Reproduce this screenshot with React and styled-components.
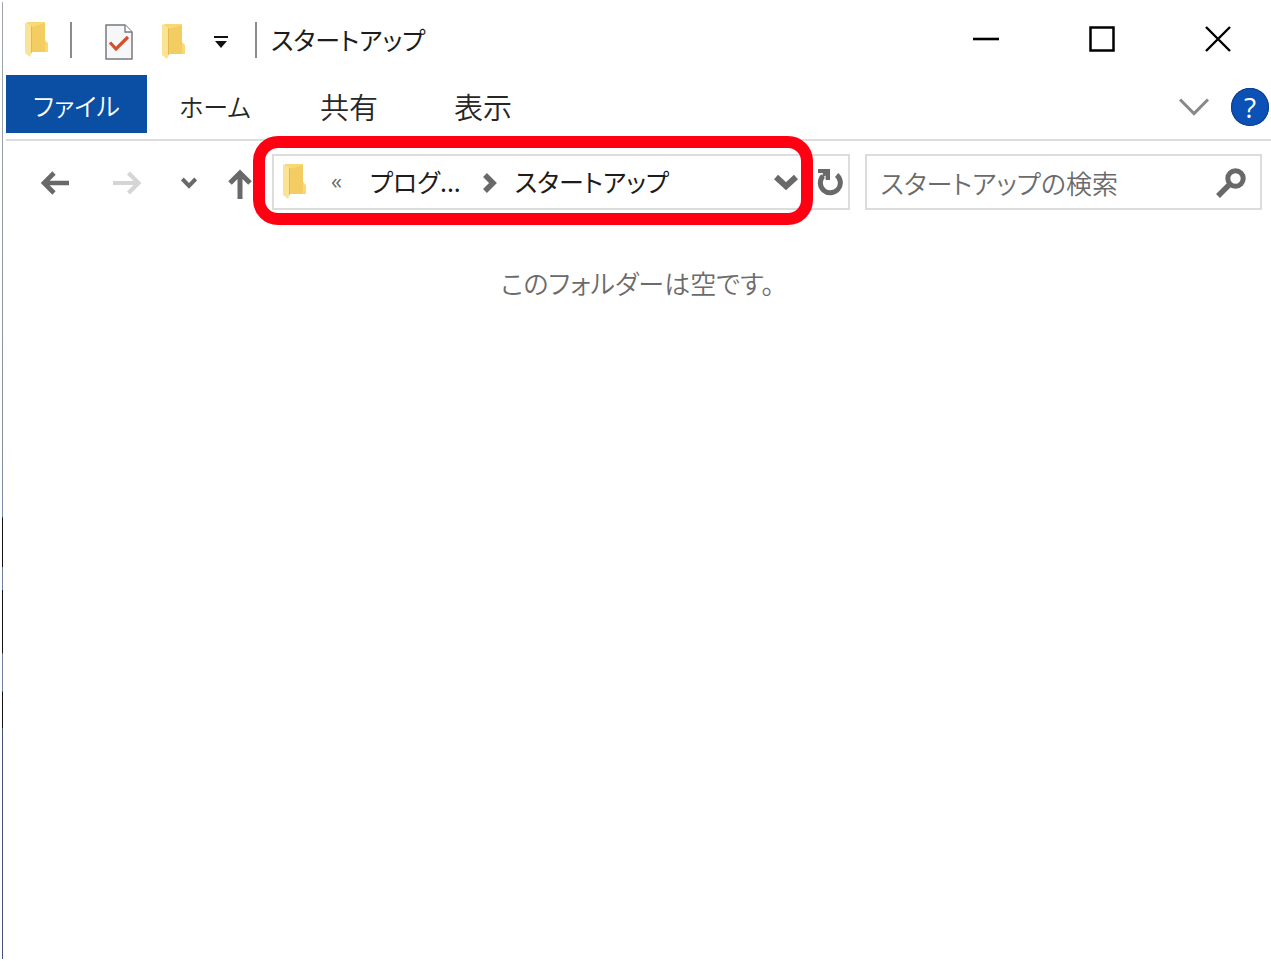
import React, { useState } from 'react';
import styled, { createGlobalStyle } from 'styled-components';

const colors = {
  blue: '#0a4fa3',
  line: '#dcdcdc',
  icon: '#696969',
  text: '#1c1c1c',
  subtext: '#6b6b6b',
  mark: '#ff0013',
};

const GlobalStyle = createGlobalStyle`
  * {
    box-sizing: border-box;
  }

  body {
    margin: 0;
    background: #ffffff;
    font-family: 'Noto Sans CJK JP', sans-serif;
    font-feature-settings: 'palt';
  }

  button,
  input {
    font: inherit;
    font-feature-settings: inherit;
    color: inherit;
    border: none;
    background: none;
    padding: 0;
    margin: 0;
  }

  svg {
    display: block;
    flex: none;
  }
`;

const Window = styled.main`
  display: flex;
  flex-direction: column;
  min-height: calc(100vh - 4px);
  margin: 2px 0 2px 2px;
  padding-left: 2px;
  background: linear-gradient(
      #a2a5ab 0%,
      #7d8ca5 53.8%,
      #111111 53.9% 59%,
      #6f819e 59.1% 61.4%,
      #111111 61.5% 68%,
      #6f819e 68.1% 72%,
      #111111 72.1% 75.8%,
      #44537a 75.9%
    )
    left top / 1px 100% no-repeat;
`;

const TitleBar = styled.header`
  display: flex;
  align-items: center;
  height: 73px;
  padding: 0 40px 0 20px;
`;

const TitleTools = styled.div`
  display: flex;
  align-items: center;
  gap: 21px;
  padding-top: 3px;
`;

const QuickAccess = styled.div`
  display: flex;
  align-items: center;
  gap: 28px;
  padding: 3px 6px 0 12px;
`;

const IconButton = styled.button`
  display: flex;
  align-items: center;
  justify-content: center;
  color: ${(props) => props.$color || colors.icon};
`;

const Separator = styled.span`
  width: 2px;
  height: 36px;
  background: #8c8c8c;
`;

const Title = styled.h1`
  margin: 0 0 0 14px;
  flex: 1;
  font-size: 25px;
  line-height: 36px;
  font-weight: 400;
  color: ${colors.text};
`;

const WindowControls = styled.div`
  display: flex;
  gap: 90px;
`;

const Ribbon = styled.nav`
  display: flex;
  align-items: flex-start;
  gap: 2px;
  height: 66px;
  margin-left: 2px;
  border-bottom: 2px solid ${colors.line};
`;

const Tab = styled.button`
  min-width: ${(props) => (props.$active ? '141px' : '132px')};
  height: 58px;
  padding-top: ${(props) => (props.$active ? '2px' : '4px')};
  font-size: ${(props) => (props.$kana ? '25px' : '29px')};
  line-height: 36px;
  font-weight: 350;
  background: ${(props) => (props.$active ? colors.blue : 'transparent')};
  color: ${(props) => (props.$active ? '#ffffff' : '#262626')};
`;

const RibbonTools = styled.div`
  display: flex;
  align-items: center;
  gap: 22px;
  height: 63px;
  margin-left: auto;
  padding-right: 2px;
`;

const HelpButton = styled.button`
  width: 38px;
  height: 38px;
  border-radius: 50%;
  background: #0c51b5;
  box-shadow: inset 0 0 0 1px #0b3f8c;
  color: #ffffff;
  font-family: 'Open Sans', sans-serif;
  font-size: 28px;
  line-height: 36px;
`;

const NavBar = styled.div`
  display: grid;
  grid-template-columns: auto 7fr 5fr;
  align-items: center;
  padding: 13px 9px 14px 15px;
`;

const History = styled.div`
  display: grid;
  grid-template-columns: 72px 72px 52px 50px;
  align-items: center;
  height: 56px;
  padding: 2px 7px 0 0;
`;

const AddressBar = styled.div`
  position: relative;
  display: flex;
  align-items: center;
  height: 56px;
  min-width: 0;
  padding: 0 5px 0 8px;
  border: 2px solid ${colors.line};
`;

const Highlight = styled.div`
  position: absolute;
  top: -20px;
  bottom: -17px;
  left: -21px;
  right: 35px;
  border: 12px solid ${colors.mark};
  border-radius: 25px;
  pointer-events: none;
`;

const Overflow = styled.span`
  margin: 0 28px 4px 24px;
  font-family: 'Open Sans', sans-serif;
  font-size: 22px;
  line-height: 28px;
  color: ${colors.icon};
`;

const Crumb = styled.button`
  padding-bottom: 2px;
  font-size: 25px;
  line-height: 36px;
  color: ${colors.text};
  white-space: nowrap;
`;

const CrumbArrow = styled.span`
  margin: 2px 18px 0 22px;
  color: ${colors.icon};
`;

const AddressTools = styled.div`
  display: flex;
  align-items: center;
  gap: 19px;
  margin-left: auto;
`;

const SearchBox = styled.label`
  display: flex;
  align-items: center;
  height: 56px;
  min-width: 0;
  margin-left: 15px;
  padding: 2px 14px 0;
  border: 2px solid ${colors.line};
  color: ${colors.icon};
`;

const SearchInput = styled.input`
  flex: 1;
  min-width: 0;
  font-size: 26px;
  line-height: 40px;
  font-weight: 350;
  outline: none;

  &::placeholder {
    color: ${colors.subtext};
    opacity: 1;
  }
`;

const Content = styled.section`
  flex: 1;
  padding-top: 39px;
`;

const EmptyMessage = styled.p`
  margin: 0;
  font-size: 26px;
  line-height: 40px;
  font-weight: 350;
  text-align: center;
  color: ${colors.subtext};
`;

const FolderIcon = () => (
  <svg width="25" height="36" viewBox="0 0 25 36" aria-hidden="true">
    <path d="M3 0H21V18L24 21V30H3Z" fill="#f8d974" />
    <path d="M8 5L21 1V30H7Z" fill="#f3cd62" />
    <path d="M1 0L8 4V30L6 35L1 31Z" fill="#fbe395" />
    <path d="M7.5 4V31" stroke="#e5b94f" strokeWidth="1" />
  </svg>
);

const DocumentIcon = () => (
  <svg width="28" height="36" viewBox="0 0 28 36" fill="none" aria-hidden="true">
    <path d="M1 1H20L27 8V35H1Z" fill="#f6f7f9" stroke="#77797c" strokeWidth="1.5" />
    <path d="M20 1V8H27" fill="#ffffff" stroke="#77797c" strokeWidth="1.3" />
    <path d="M5 18.5L11 25L23 13" stroke="#d3502a" strokeWidth="3.2" />
  </svg>
);

const CustomizeIcon = () => (
  <svg width="14" height="12" viewBox="0 0 14 12" aria-hidden="true">
    <path d="M0 0H14V2H0ZM1 5H13L7 12Z" fill="#111111" />
  </svg>
);

const BackIcon = () => (
  <svg width="30" height="30" viewBox="0 0 30 30" fill="none" aria-hidden="true">
    <path d="M29 15H5M14 5L4 15L14 25" stroke="currentColor" strokeWidth="4.6" />
  </svg>
);

const ForwardIcon = () => (
  <svg width="30" height="30" viewBox="0 0 30 30" fill="none" aria-hidden="true">
    <path d="M1 15H26M16.5 5L26.5 15L16.5 25" stroke="currentColor" strokeWidth="4.2" />
  </svg>
);

const UpIcon = () => (
  <svg width="30" height="34" viewBox="0 0 30 34" fill="none" aria-hidden="true">
    <path d="M15 33V8M5 17L15 7L25 17" stroke="currentColor" strokeWidth="5" />
  </svg>
);

const ChevronIcon = ({ width = 24, height = 17, stroke = 6 }) => (
  <svg width={width} height={height} viewBox={`0 0 ${width} ${height}`} fill="none" aria-hidden="true">
    <path
      d={`M${stroke / 3} ${stroke / 2}L${width / 2} ${height - stroke * 0.8}L${width - stroke / 3} ${stroke / 2}`}
      stroke="currentColor"
      strokeWidth={stroke}
    />
  </svg>
);

const RefreshIcon = () => (
  <svg width="26" height="28" viewBox="0 0 26 28" fill="none" aria-hidden="true">
    <path d="M19.6 7A10 10 0 1 1 6 8" stroke="currentColor" strokeWidth="5" />
    <path d="M1 1H13V12H8.6V7.5L4.5 10.5L6 5H1Z" fill="currentColor" />
  </svg>
);

const SearchIcon = () => (
  <svg width="30" height="30" viewBox="0 0 30 30" fill="none" aria-hidden="true">
    <circle cx="19.5" cy="10.5" r="7.7" stroke="currentColor" strokeWidth="5" />
    <path d="M14.5 15.5L2 28" stroke="currentColor" strokeWidth="5.4" />
  </svg>
);

const App = () => {
  const [query, setQuery] = useState('');

  return (
    <>
      <GlobalStyle />
      <Window>
        <TitleBar>
          <TitleTools>
            <FolderIcon />
            <Separator />
            <QuickAccess>
              <IconButton aria-label="プロパティ">
                <DocumentIcon />
              </IconButton>
              <IconButton aria-label="新しいフォルダー">
                <FolderIcon />
              </IconButton>
              <IconButton aria-label="カスタマイズ">
                <CustomizeIcon />
              </IconButton>
            </QuickAccess>
            <Separator />
          </TitleTools>
          <Title>スタートアップ</Title>
          <WindowControls>
            <IconButton $color="#000000" aria-label="最小化">
              <svg width="26" height="26" viewBox="0 0 26 26" fill="none">
                <path d="M0 13H26" stroke="currentColor" strokeWidth="2.6" />
              </svg>
            </IconButton>
            <IconButton $color="#000000" aria-label="最大化">
              <svg width="26" height="26" viewBox="0 0 26 26" fill="none">
                <path d="M1.5 1.5H24.5V24.5H1.5Z" stroke="currentColor" strokeWidth="2.5" />
              </svg>
            </IconButton>
            <IconButton $color="#000000" aria-label="閉じる">
              <svg width="26" height="26" viewBox="0 0 26 26" fill="none">
                <path d="M1 1L25 25M25 1L1 25" stroke="currentColor" strokeWidth="2.4" />
              </svg>
            </IconButton>
          </WindowControls>
        </TitleBar>

        <Ribbon>
          <Tab $active $kana>ファイル</Tab>
          <Tab $kana>ホーム</Tab>
          <Tab>共有</Tab>
          <Tab>表示</Tab>
          <RibbonTools>
            <IconButton $color="#888888" aria-label="リボンの展開">
              <ChevronIcon width={30} height={18} stroke={3} />
            </IconButton>
            <HelpButton aria-label="ヘルプ">?</HelpButton>
          </RibbonTools>
        </Ribbon>

        <NavBar>
          <History>
            <IconButton aria-label="戻る">
              <BackIcon />
            </IconButton>
            <IconButton $color="#d5d5d5" aria-label="進む">
              <ForwardIcon />
            </IconButton>
            <IconButton aria-label="最近表示した場所">
              <ChevronIcon width={16} height={12} stroke={4} />
            </IconButton>
            <IconButton aria-label="上へ">
              <UpIcon />
            </IconButton>
          </History>
          <AddressBar>
            <FolderIcon />
            <Overflow>«</Overflow>
            <Crumb>プログ...</Crumb>
            <CrumbArrow>
              <svg width="14" height="20" viewBox="0 0 14 20" fill="none">
                <path d="M2 2L10 10L2 18" stroke="currentColor" strokeWidth="5.5" />
              </svg>
            </CrumbArrow>
            <Crumb>スタートアップ</Crumb>
            <AddressTools>
              <IconButton aria-label="以前の場所">
                <ChevronIcon />
              </IconButton>
              <IconButton aria-label="更新">
                <RefreshIcon />
              </IconButton>
            </AddressTools>
            <Highlight />
          </AddressBar>
          <SearchBox>
            <SearchInput
              type="text"
              aria-label="スタートアップの検索"
              placeholder="スタートアップの検索"
              value={query}
              onChange={(e) => setQuery(e.target.value)}
            />
            <SearchIcon />
          </SearchBox>
        </NavBar>

        <Content>
          <EmptyMessage>このフォルダーは空です。</EmptyMessage>
        </Content>
      </Window>
    </>
  );
};

export default App;
